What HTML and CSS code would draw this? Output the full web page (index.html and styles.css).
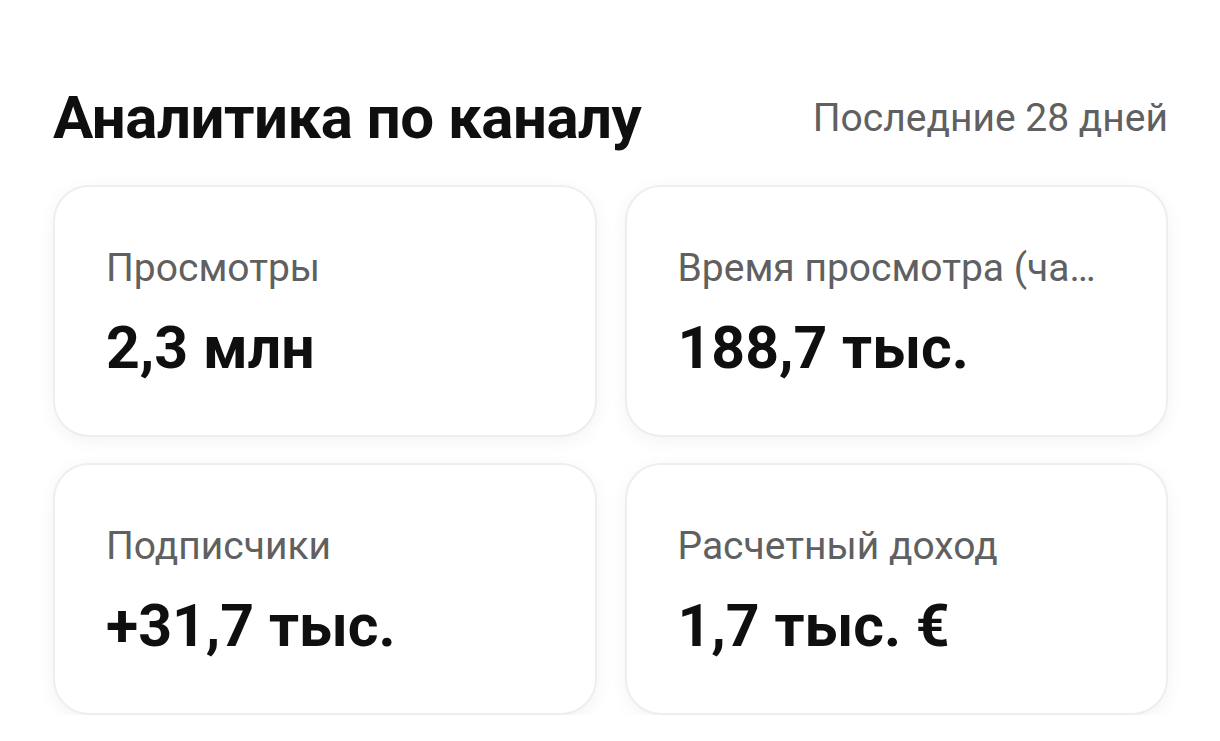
FILE: index.html
```html
<!DOCTYPE html>
<html lang="ru">
<head>
    <meta charset="UTF-8">
    <meta name="viewport" content="width=device-width, initial-scale=1.0">
    <title>Аналитика по каналу</title>
    <link rel="stylesheet" href="styles.css">
</head>
<body>
    <div class="analytics">
        <div class="analytics-header">
            <h1>Аналитика по каналу</h1>
            <span class="period">Последние 28 дней</span>
        </div>
        <div class="stats">
            <div class="stat-card">
                <p class="stat-label">Просмотры</p>
                <p class="stat-value">2,3 млн</p>
            </div>
            <div class="stat-card">
                <p class="stat-label">Время просмотра (часы)</p>
                <p class="stat-value">188,7 тыс.</p>
            </div>
            <div class="stat-card">
                <p class="stat-label">Подписчики</p>
                <p class="stat-value">+31,7 тыс.</p>
            </div>
            <div class="stat-card">
                <p class="stat-label">Расчетный доход</p>
                <p class="stat-value">1,7 тыс. €</p>
            </div>
        </div>
    </div>
</body>
</html>
```

FILE: styles.css
```css
body {
    font-family: Roboto, 'Noto Sans', Arial, sans-serif;
    margin: 0;
    padding: 0;
    background-color: #fff;
    color: #0f0f0f;
}
.analytics {
    padding: 82px 52px 0 53px;
}
.analytics-header {
    display: flex;
    justify-content: space-between;
    align-items: center;
}
.analytics-header h1 {
    margin: 0;
    font-size: 60px;
    line-height: 72px;
    font-weight: 700;
    letter-spacing: -0.5px;
}
.period {
    font-size: 39px;
    line-height: 46px;
    color: #606060;
}
.stats {
    display: grid;
    grid-template-columns: 1fr 1fr;
    column-gap: 28px;
    row-gap: 26px;
    margin-top: 31px;
}
.stat-card {
    height: 252px;
    box-sizing: border-box;
    padding: 58px 70px 0 51px;
    border: 2px solid #eeeeee;
    border-radius: 36px;
    background-color: #fff;
    box-shadow: 0 4px 18px rgba(0, 0, 0, 0.05);
    min-width: 0;
}
.stat-label {
    margin: 0;
    font-size: 39px;
    line-height: 46px;
    color: #606060;
    white-space: nowrap;
    overflow: hidden;
    text-overflow: ellipsis;
}
.stat-value {
    margin: 22px 0 0;
    font-size: 59px;
    line-height: 70px;
    font-weight: 700;
}
```
